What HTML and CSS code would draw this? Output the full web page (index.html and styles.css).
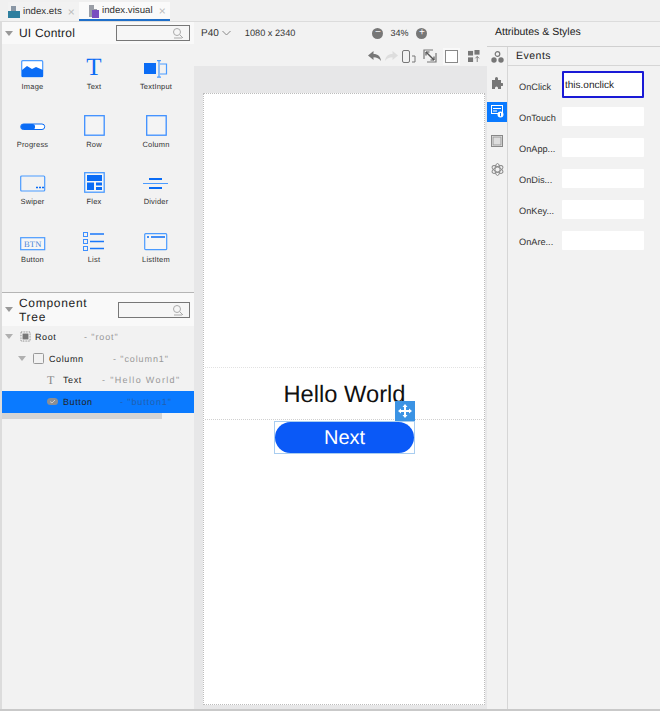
FILE: index.html
```html
<!DOCTYPE html>
<html lang="en">
<head>
<meta charset="utf-8">
<title>index.visual</title>
<link rel="stylesheet" href="styles.css">
</head>
<body>
<div class="app">
  <div class="tabs">
    <div class="tab">
      <svg class="tabicon" width="12" height="14" viewBox="0 0 12 14"><path d="M3 1h5v5H3z" fill="#8a97a5"/><rect x="0" y="6" width="12" height="7" fill="#2f7f9f"/></svg>
      <span>index.ets</span><span class="close">×</span>
    </div>
    <div class="tab active">
      <svg class="tabicon" width="12" height="14" viewBox="0 0 12 14"><path d="M2 1h5v4h3v8H2z" fill="#9a9ea6"/><rect x="5" y="6" width="7" height="8" fill="#7a4fc0"/></svg>
      <span>index.visual</span><span class="close">×</span>
    </div>
  </div>
  <div class="main">
    <aside class="left">
      <div class="section-head control-head">
        <span class="tri"></span>
        <span class="section-title">UI Control</span>
        <div class="search"><svg width="12" height="12" viewBox="0 0 12 12"><circle cx="5" cy="5" r="3.5" fill="none" stroke="#aaa"/><path d="M8 8l3 3M2 11h8" stroke="#aaa"/></svg></div>
      </div>
      <div class="palette">
        <div class="item">
          <svg width="24" height="18" viewBox="0 0 24 18"><rect x=".7" y=".7" width="21" height="16" rx="1" fill="#fff" stroke="#4a9bff" stroke-width="1.2"/><path d="M1 17V10l5-4 5 3 4-2 7 3v7z" fill="#0a6cf5"/></svg>
          <span>Image</span>
        </div>
        <div class="item">
          <span class="glyph-t">T</span>
          <span>Text</span>
        </div>
        <div class="item">
          <svg width="24" height="18" viewBox="0 0 24 18"><rect x="0" y="3" width="12" height="11" fill="#0a6cf5"/><path d="M16 4h6.500v10H16" fill="none" stroke="#4a9bff" stroke-width="1.200"/><path d="M13 .7h4M15 .7v16.500M13 17.200h4" fill="none" stroke="#4a9bff" stroke-width="1.200"/></svg>
          <span>TextInput</span>
        </div>
        <div class="item">
          <svg width="26" height="18" viewBox="0 0 26 18"><rect x=".7" y="6" width="24" height="5.500" rx="2.700" fill="#fff" stroke="#0a6cf5"/><rect x="1" y="6" width="14" height="5.500" rx="2.500" fill="#0a6cf5"/></svg>
          <span>Progress</span>
        </div>
        <div class="item">
          <svg width="21" height="21" viewBox="0 0 21 21"><rect x=".7" y=".7" width="19.500" height="19.500" fill="#fff" fill-opacity=".2" stroke="#3d8fff" stroke-width="1.300"/></svg>
          <span>Row</span>
        </div>
        <div class="item">
          <svg width="21" height="21" viewBox="0 0 21 21"><rect x=".7" y=".7" width="19.500" height="19.500" fill="#fff" fill-opacity=".2" stroke="#3d8fff" stroke-width="1.300"/></svg>
          <span>Column</span>
        </div>
        <div class="item">
          <svg width="26" height="18" viewBox="0 0 26 18"><rect x=".7" y="1" width="24" height="15" rx="1" fill="none" stroke="#4a9bff" stroke-width="1.200"/><path d="M16 12.500h2M19 12.500h2M22 12.500h2" stroke="#0a6cf5" stroke-width="1.600"/></svg>
          <span>Swiper</span>
        </div>
        <div class="item">
          <svg width="21" height="21" viewBox="0 0 21 21"><rect x=".7" y=".7" width="19.500" height="19.500" fill="#fff" fill-opacity=".3" stroke="#4a9bff" stroke-width="1.300"/><rect x="3" y="3" width="15" height="6" fill="#0a6cf5"/><rect x="3" y="10.500" width="7" height="7.500" fill="#0a6cf5"/><rect x="12" y="10.500" width="6" height="3" fill="#0a6cf5"/><rect x="12" y="15" width="6" height="3" fill="#0a6cf5"/></svg>
          <span>Flex</span>
        </div>
        <div class="item">
          <svg width="26" height="18" viewBox="0 0 26 18"><path d="M6 4h13M6 13h13" stroke="#0a6cf5" stroke-width="2"/><path d="M0 8.500h25" stroke="#4a9bff" stroke-width="1"/></svg>
          <span>Divider</span>
        </div>
        <div class="item">
          <svg width="26" height="14" viewBox="0 0 26 14"><rect x=".7" y=".7" width="24" height="12" fill="#fff" fill-opacity=".3" stroke="#4a9bff" stroke-width="1.200"/><text x="12.700" y="10" class="btn-glyph" text-anchor="middle">BTN</text></svg>
          <span>Button</span>
        </div>
        <div class="item">
          <svg width="22" height="19" viewBox="0 0 22 19"><rect x=".5" y=".5" width="4" height="4" fill="none" stroke="#3d8fff"/><rect x=".5" y="7.500" width="4" height="4" fill="none" stroke="#3d8fff"/><rect x=".5" y="14.500" width="4" height="4" fill="none" stroke="#3d8fff"/><path d="M7 2h14M7 9.500h14M7 16.500h14" stroke="#1a78fa" stroke-width="1.500"/></svg>
          <span>List</span>
        </div>
        <div class="item">
          <svg width="24" height="18" viewBox="0 0 24 18"><rect x=".7" y=".7" width="22" height="16" rx="1" fill="#fff" fill-opacity=".3" stroke="#4a9bff" stroke-width="1.200"/><path d="M3 4h2M7 4h14" stroke="#0a6cf5" stroke-width="1.500"/></svg>
          <span>ListItem</span>
        </div>
      </div>
      <div class="section-head tree-head">
        <span class="tri"></span>
        <span class="section-title tree-title">Component Tree</span>
        <div class="search"><svg width="12" height="12" viewBox="0 0 12 12"><circle cx="5" cy="5" r="3.500" fill="none" stroke="#aaa"/><path d="M8 8l3 3M2 11h8" stroke="#aaa"/></svg></div>
      </div>
      <div class="tree">
        <div class="row lv0">
          <span class="tri small"></span>
          <svg width="11" height="11" viewBox="0 0 11 11"><rect x="1" y="1" width="9" height="9" fill="#fff" stroke="#888" stroke-dasharray="1 .6"/><rect x="2.500" y="2.500" width="6" height="6" fill="#777"/></svg>
          <span class="name root-name">Root</span><span class="id">- "root"</span>
        </div>
        <div class="row lv1">
          <span class="tri small"></span>
          <svg width="11" height="11" viewBox="0 0 11 11"><rect x=".5" y=".5" width="10" height="10" rx="1" fill="none" stroke="#999"/></svg>
          <span class="name col-name">Column</span><span class="id">- "column1"</span>
        </div>
        <div class="row lv2">
          <span class="tree-t">T</span>
          <span class="name text-name">Text</span><span class="id hello-id">- "Hello World"</span>
        </div>
        <div class="row lv2 selected">
          <svg width="11" height="7" viewBox="0 0 11 7"><rect width="11" height="7" rx="3.500" fill="#8c8f94"/><path d="M3 3.500l2 1.500 3-3" fill="none" stroke="#ccc"/></svg>
          <span class="name btn-name">Button</span><span class="id">- "button1"</span>
        </div>
        <div class="hscroll"></div>
      </div>
    </aside>

    <section class="center">
      <div class="topbar">
        <span class="device">P40</span>
        <svg class="chev" width="9" height="6" viewBox="0 0 9 6"><path d="M.5 1l4 4 4-4" fill="none" stroke="#888"/></svg>
        <span class="res">1080 x 2340</span>
        <div class="zoom">
          <span class="zbtn">−</span><span class="pct">34%</span><span class="zbtn">+</span>
        </div>
      </div>
      <div class="toolbar">
        <svg width="13" height="10" viewBox="0 0 13 10"><path d="M0 4.500L5.500 0v3C10 3 12.500 5.500 13 10 11 7.500 9 6.300 5.500 6.300V9z" fill="#777"/></svg>
        <svg width="13" height="10" viewBox="0 0 13 10"><path d="M13 4.500L7.500 0v3C3 3 .5 5.500 0 10 2 7.500 4 6.300 7.500 6.300V9z" fill="#ddd"/></svg>
        <svg width="14" height="13" viewBox="0 0 14 13"><rect x=".5" y=".5" width="7" height="12" rx="1.500" fill="none" stroke="#777"/><path d="M10 6h3v6h-3" fill="none" stroke="#777"/></svg>
        <svg class="fit" width="14" height="14" viewBox="0 0 14 14"><path d="M1 10V1h9M4 13h9V4" fill="none" stroke="#777" stroke-width="1.200"/><path d="M3 3l8 8" stroke="#555" stroke-width="1.500"/><path d="M3 3h3.500M3 3v3.500M11 11H7.500M11 11V7.500" stroke="#555" stroke-width="1.200"/></svg>
        <span class="boxbtn"><span class="boxinner"></span></span>
        <svg width="12" height="12" viewBox="0 0 13 13"><rect y="1" width="5.500" height="5" fill="#777"/><rect x="7" width="5.500" height="5" fill="#777"/><rect y="8" width="5.500" height="5" fill="#777"/><path d="M10 7v6M8 9l2-2 2 2" fill="none" stroke="#777"/></svg>
      </div>
      <div class="canvas">
        <div class="artboard">
          <div class="text-row"><span class="hello">Hello World</span></div>
          <div class="button-wrap">
            <div class="next">Next</div>
            <span class="handle">
              <svg width="14" height="14" viewBox="0 0 14 14"><path d="M7 0l2.500 3H8v3h3V4.500L14 7l-3 2.500V8H8v3h1.500L7 14l-2.500-3H6V8H3v1.500L0 7l3-2.500V6h3V3H4.500z" fill="#fff"/></svg>
            </span>
          </div>
        </div>
      </div>
    </section>

    <div class="rightcol">
      <div class="attr-title">Attributes &amp; Styles</div>
      <div class="rightbody">
        <nav class="rail">
          <span class="railbtn">
            <svg width="13" height="12" viewBox="0 0 13 12"><circle cx="6.500" cy="3" r="2.300" fill="none" stroke="#777" stroke-width="1.200"/><circle cx="3" cy="9" r="2.700" fill="#777"/><circle cx="10" cy="9" r="2.700" fill="#777"/></svg>
          </span>
          <span class="railbtn">
            <svg width="12" height="12" viewBox="0 0 12 12"><path d="M1 3h3V1.500a1.500 1.500 0 0 1 3 0V3h3v3h1.200a1.500 1.500 0 0 1 0 3H10v3H7v-1a1.500 1.500 0 0 0-3 0v1H1z" fill="#777"/></svg>
          </span>
          <span class="railbtn on">
            <svg width="13" height="13" viewBox="0 0 13 13"><rect x=".5" y=".5" width="11" height="8" fill="none" stroke="#fff"/><path d="M2 3h8v1H2z" fill="#fff"/><path d="M2 6h4" stroke="#fff"/><circle cx="9.500" cy="9.500" r="3" fill="#fff"/><path d="M9.500 8v3.200" stroke="#0a7aff"/></svg>
          </span>
          <span class="railbtn">
            <svg width="12" height="12" viewBox="0 0 12 12"><rect x=".5" y=".5" width="11" height="11" fill="none" stroke="#888"/><rect x="2" y="2" width="8" height="8" fill="#ddd" stroke="#999"/></svg>
          </span>
          <span class="railbtn">
            <svg width="13" height="13" viewBox="0 0 13 13"><g fill="none" stroke="#888"><ellipse cx="6.500" cy="6.500" rx="2.500" ry="6"/><ellipse cx="6.500" cy="6.500" rx="2.500" ry="6" transform="rotate(60 6.500 6.500)"/><ellipse cx="6.500" cy="6.500" rx="2.500" ry="6" transform="rotate(120 6.500 6.500)"/></g></svg>
          </span>
        </nav>
        <div class="events">
          <div class="events-title">Events</div>
          <div class="fields">
            <div class="field"><label class="flabel">OnClick</label><div class="finput focus">this.onclick</div></div>
            <div class="field"><label class="flabel">OnTouch</label><div class="finput"></div></div>
            <div class="field"><label class="flabel">OnApp...</label><div class="finput"></div></div>
            <div class="field"><label class="flabel">OnDis...</label><div class="finput"></div></div>
            <div class="field"><label class="flabel">OnKey...</label><div class="finput"></div></div>
            <div class="field"><label class="flabel">OnAre...</label><div class="finput"></div></div>
          </div>
        </div>
      </div>
    </div>
  </div>
  <div class="bottomline"></div>
</div>
</body>
</html>
```
FILE: styles.css
```css
* { box-sizing: border-box; }
html, body { margin: 0; padding: 0; }
body {
  width: 660px;
  height: 711px;
  overflow: hidden;
  background: #f2f2f2;
  font-family: "Liberation Sans", Arial, sans-serif;
  color: #222;
  text-rendering: geometricPrecision;
}
.app { width: 660px; height: 711px; display: flex; flex-direction: column; }

.tabs {
  height: 22px;
  display: flex;
  align-items: stretch;
  padding: 2px 0 0 8px;
  background: #f0f0f0;
  border-bottom: 1px solid #dcdcdc;
  flex: none;
}
.tab {
  display: flex;
  align-items: center;
  gap: 3px;
  font-size: 9.700px;
  color: #333;
  width: 71px;
  background: #f2f2f2;
}
.tab.active {
  width: 91px;
  padding-left: 8px;
  background: #fafafa;
  border-bottom: 2px solid #1f6fc9;
}
.close { color: #bbb; font-size: 12px; margin-left: 3px; }
.tabicon { flex: none; }

.main { flex: 1; display: flex; min-height: 0; }

.left {
  width: 194px;
  flex: none;
  border-left: 2px solid #dcdcdc;
  background: #f2f2f2;
  display: flex;
  flex-direction: column;
}
.section-head {
  display: flex;
  align-items: center;
  background: #f9f9f9;
  padding-left: 3px;
}
.control-head { height: 22px; }
.tree-head {
  height: 34px;
  border-top: 1px solid #b5b5b5;
  width: 192px;
}
.tri {
  width: 0;
  height: 0;
  border-left: 4px solid transparent;
  border-right: 4px solid transparent;
  border-top: 5px solid #999;
  flex: none;
}
.tri.small { border-top-color: #b0b0b0; }
.section-title { font-size: 12px; color: #222; margin-left: 6px; letter-spacing: .2px; }
.tree-title { width: 76px; line-height: 14px; letter-spacing: .7px; }
.search {
  margin-left: auto;
  margin-right: 4px;
  width: 72px;
  height: 16px;
  border: 1px solid #777;
  background: #f6f6f6;
  display: flex;
  align-items: center;
  justify-content: flex-end;
  padding-right: 5px;
}
.control-head .search { width: 74px; margin-right: 4px; }

.palette {
  height: 248px;
  display: grid;
  grid-template-columns: 61px 62px 62px;
  grid-auto-rows: 57.700px;
  padding: 12px 0 0 0;
  align-content: start;
}
.item {
  display: flex;
  flex-direction: column;
  align-items: center;
  justify-content: flex-end;
  height: 35px;
  gap: 4px;
  font-size: 7.500px;
  color: #333;
  letter-spacing: .2px;
}
.glyph-t {
  font-family: "Liberation Serif", serif;
  font-size: 25px;
  line-height: 20px;
  color: #0a6cf5;
}
.btn-glyph {
  font-family: "Liberation Serif", serif;
  font-size: 8.500px;
  fill: #4a84d8;
}

.tree { font-size: 9px; letter-spacing: .6px; }
.row {
  height: 21.700px;
  display: flex;
  align-items: center;
  white-space: nowrap;
}
.lv0 { padding-left: 3px; }
.lv1 { padding-left: 16px; }
.lv2 { padding-left: 45px; }
.row svg { flex: none; }
.lv0 svg { margin-left: 7px; }
.lv1 svg { margin-left: 7px; }
.name { color: #222; margin-left: 4px; }
.id { color: #999; letter-spacing: .9px; }
.hello-id { letter-spacing: 1.350px; }
.root-name { width: 49px; }
.col-name { width: 64px; margin-left: 5px; }
.text-name { width: 39px; margin-left: 5px; }
.btn-name { width: 57px; margin-left: 5px; }
.tree-t {
  font-family: "Liberation Serif", serif;
  font-size: 12px;
  color: #888;
  width: 11px;
}
.selected { background: #0a7aff; width: 192px; }
.selected .id { color: #2060b0; }
.hscroll { height: 6px; width: 160px; background: #d4d4d4; }

.center { width: 293px; flex: none; display: flex; flex-direction: column; }
.topbar {
  height: 22px;
  display: flex;
  align-items: center;
  padding-left: 7px;
  font-size: 9px;
  color: #333;
  flex: none;
}
.device { font-size: 10px; }
.chev { margin-left: 3px; }
.res { margin-left: 14px; font-size: 9.200px; }
.zoom { display: flex; align-items: center; gap: 7px; margin-left: 77px; }
.zbtn {
  width: 11px;
  height: 11px;
  border-radius: 50%;
  background: #777;
  color: #fff;
  font-size: 10px;
  line-height: 10px;
  text-align: center;
}
.pct { font-size: 9px; width: 19px; }
.toolbar {
  height: 22px;
  display: flex;
  align-items: center;
  justify-content: flex-end;
  gap: 4px;
  padding: 2px 7px 0 0;
  flex: none;
}
.fit { margin-left: 3px; }
.boxbtn {
  width: 17px;
  height: 17px;
  background: #f9f9f9;
  display: flex;
  align-items: center;
  justify-content: center;
  margin: 0 4px 0 2px;
}
.boxinner { width: 13px; height: 13px; border: 1px solid #888; background: #fff; }
.canvas {
  flex: 1;
  background: #e7e7e8;
  padding: 27px 2px 3px 9px;
  min-height: 0;
}
.artboard {
  height: 612px;
  width: 282px;
  background: #fff;
  border: 1px dotted #bdbdbd;
  padding: 273px 0 0 1px;
}
.text-row {
  height: 53px;
  border-top: 1px dotted #e2e2e2;
  border-bottom: 1px dotted #d0d0d0;
  padding-top: 3px;
  display: flex;
  align-items: center;
  justify-content: center;
  font-size: 23.700px;
  color: #111;
}
.button-wrap {
  position: relative;
  width: 141px;
  height: 33px;
  margin: 1px 0 0 69px;
  border: 1px solid #a9cdf0;
}
.next {
  height: 31px;
  border-radius: 16px;
  background: #0a59f7;
  color: #fff;
  font-size: 20px;
  line-height: 32px;
  text-align: center;
}
.handle {
  position: absolute;
  top: -21px;
  right: -1px;
  width: 20px;
  height: 20px;
  background: #3b93e4;
  display: flex;
  align-items: center;
  justify-content: center;
}

.rightcol { flex: 1; display: flex; flex-direction: column; min-width: 0; }
.attr-title {
  height: 24px;
  margin-left: 8px;
  padding-top: 4px;
  font-size: 10.500px;
  color: #222;
  flex: none;
}
.rightbody { flex: 1; display: flex; min-height: 0; border-top: 1px solid #d0d0d0; }
.rail { width: 20px; flex: none; display: flex; flex-direction: column; }
.railbtn {
  height: 20px;
  margin-bottom: 8.800px;
  display: flex;
  align-items: center;
  justify-content: center;
}
.railbtn:first-child { height: 20px; margin-bottom: 6px; }
.railbtn.on { background: #0a7aff; }
.events { flex: 1; border-left: 1px solid #d6d6d6; min-width: 0; }
.events-title {
  height: 19px;
  padding: 3px 0 0 8px;
  font-size: 10.500px;
  letter-spacing: .5px;
  color: #222;
  border-bottom: 1px solid #d6d6d6;
}
.fields { padding: 9px 0 0 11px; display: flex; flex-direction: column; gap: 11px; }
.field { display: flex; align-items: center; height: 20px; }
.flabel { width: 43px; font-size: 9.200px; color: #333; flex: none; padding-top: 4px; }
.finput {
  width: 82px;
  height: 19px;
  background: #fff;
  font-size: 10px;
  color: #222;
  border-radius: 1px;
}
.finput.focus {
  height: 27px;
  border: 2px solid #1a1ad6;
  padding-left: 1px;
  line-height: 26px;
  margin: -4px 0 -3px 0;
}
.bottomline { height: 2px; background: #c9c9c9; flex: none; }
```
